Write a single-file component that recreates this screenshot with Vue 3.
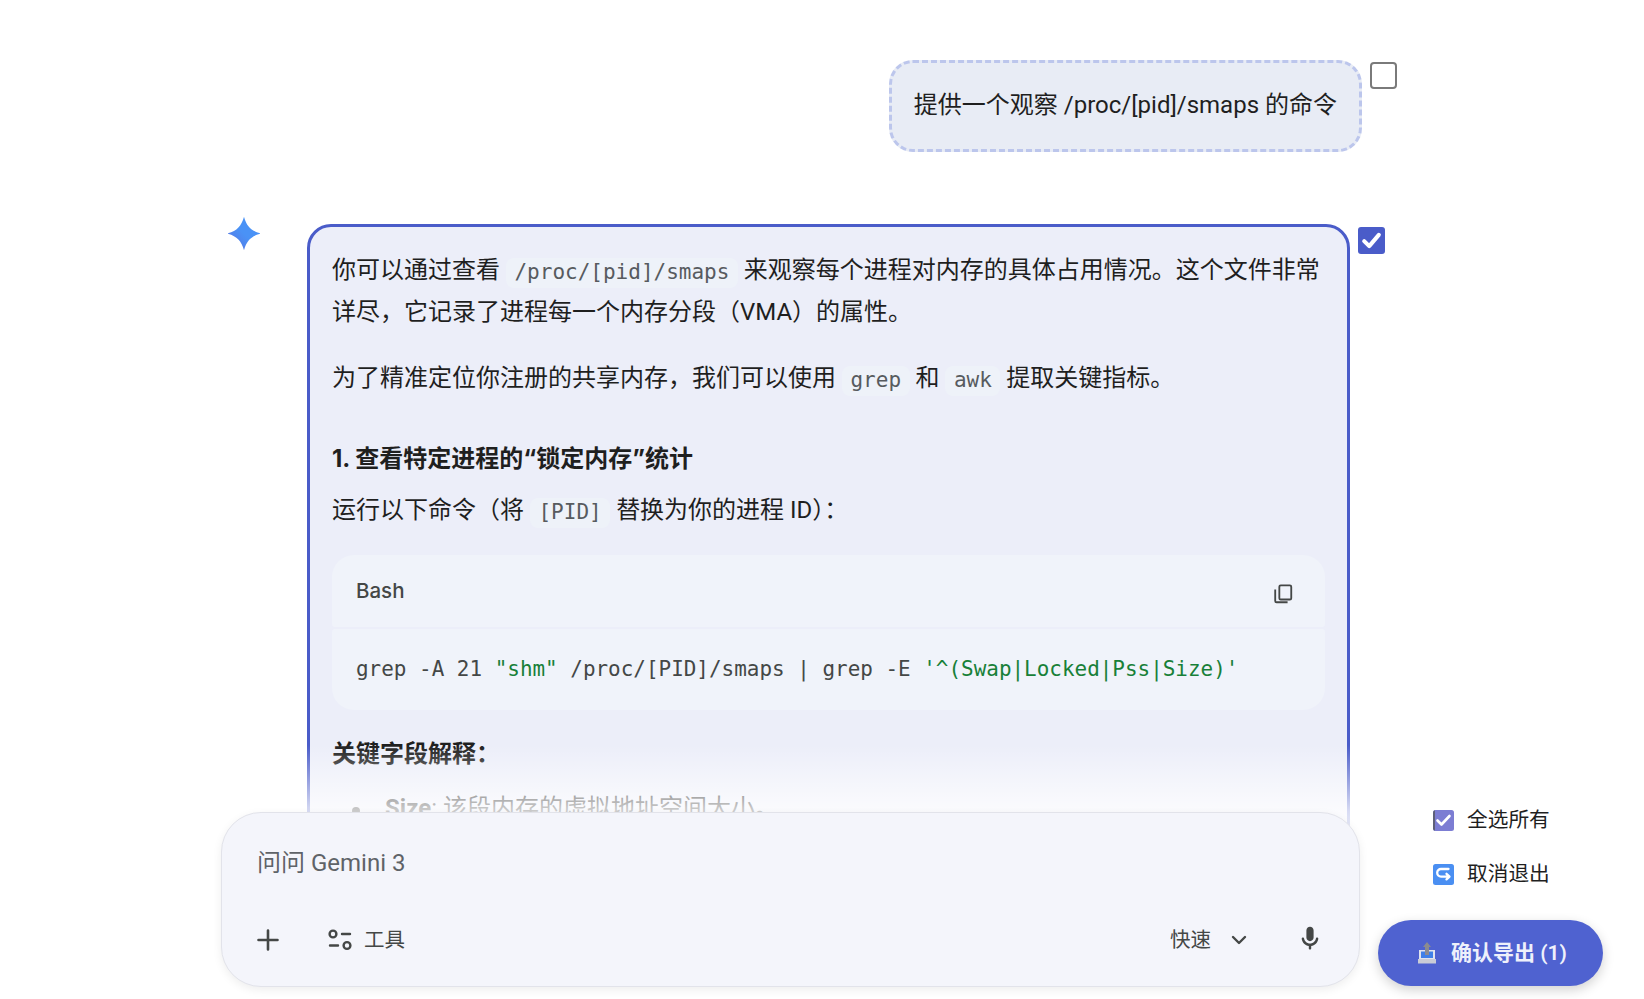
<script setup>
const codeParts = [
  { text: 'grep -A 21 ', cls: '' },
  { text: '"shm"', cls: 'str' },
  { text: ' /proc/[PID]/smaps | grep -E ', cls: '' },
  { text: "'^(Swap|Locked|Pss|Size)'", cls: 'str' },
]
</script>

<template>
  <div class="page">
    <div class="chat">
      <div class="user-row">
        <div class="bubble">提供一个观察 /proc/[pid]/smaps 的命令</div>
        <span class="check-empty"></span>
      </div>

      <div class="model-row">
        <svg class="spark" viewBox="0.5 0.5 23 23">
          <defs>
            <linearGradient id="sparkFill" x1="0.1" y1="0.9" x2="0.6" y2="0.4">
              <stop offset="0" stop-color="#5f68d6" />
              <stop offset="0.45" stop-color="#4f86ee" />
              <stop offset="0.8" stop-color="#4a92f6" />
            </linearGradient>
          </defs>
          <path fill="url(#sparkFill)" d="M12 0C14 7 17 10 24 12 17 14 14 17 12 24 10 17 7 14 0 12 7 10 10 7 12 0z" />
        </svg>

        <div class="card">
          <p>你可以通过查看 <code>/proc/[pid]/smaps</code> 来观察每个进程对内存的具体占用情况。这个文件非常详尽，它记录了进程每一个内存分段（VMA）的属性。</p>
          <p class="gap">为了精准定位你注册的共享内存，我们可以使用 <code>grep</code> 和 <code>awk</code> 提取关键指标。</p>
          <h3>1. 查看特定进程的“锁定内存”统计</h3>
          <p class="after-title">运行以下命令（将 <code>[PID]</code> 替换为你的进程 ID）：</p>

          <div class="code-block">
            <div class="code-head">
              <span>Bash</span>
              <svg class="copy" viewBox="0 0 24 24" fill="none" stroke="#444746" stroke-width="2">
                <rect x="8" y="2.500" width="13" height="15.500" rx="1.500" />
                <path d="M3.500 7v12.500A1.500 1.500 0 0 0 5 21h12" />
              </svg>
            </div>
            <pre class="code-body"><span v-for="(part, i) in codeParts" :key="i" :class="part.cls">{{ part.text }}</span></pre>
          </div>

          <p class="fields"><strong>关键字段解释：</strong></p>
          <ul>
            <li><span><strong>Size</strong>: 该段内存的虚拟地址空间大小。</span></li>
          </ul>
        </div>

        <span class="check-on">
          <svg viewBox="0 0 24 24" fill="none" stroke="#fff" stroke-width="3.600" stroke-linecap="round" stroke-linejoin="round">
            <path d="M5.500 12.500l4.500 4.500 8.500-10" />
          </svg>
        </span>
      </div>
    </div>

    <div class="dock">
      <div class="input">
        <div class="placeholder">问问 Gemini 3</div>
        <div class="toolbar">
          <svg class="plus" viewBox="0 0 22 22" stroke="#444746" stroke-width="2.600" stroke-linecap="round">
            <path d="M11 1.500v19M1.500 11h19" />
          </svg>
          <svg class="tools" viewBox="0 0 24 22" fill="none" stroke="#444746" stroke-width="2.400" stroke-linecap="round">
            <circle cx="5" cy="5" r="3.400" />
            <path d="M14 5h8M2 16.500h8" />
            <circle cx="19" cy="16.500" r="3.400" />
          </svg>
          <span class="tools-label">工具</span>
          <span class="speed">快速</span>
          <svg class="chevron" viewBox="0 0 16 10" fill="none" stroke="#444746" stroke-width="2.400" stroke-linecap="round" stroke-linejoin="round">
            <path d="M2 2l6 6 6-6" />
          </svg>
          <svg class="mic" viewBox="4.500 1.500 15 20.500" fill="#444746">
            <path d="M12 14c1.660 0 3-1.340 3-3V5c0-1.660-1.340-3-3-3S9 3.340 9 5v6c0 1.660 1.340 3 3 3zm5.910-3c-.49 0-.9.36-.98.85C16.520 14.200 14.470 16 12 16s-4.520-1.800-4.930-4.150c-.08-.49-.49-.85-.98-.85-.61 0-1.090.54-1 1.140.49 3 2.890 5.350 5.910 5.780V20c0 .55.45 1 1 1s1-.45 1-1v-2.080c3.020-.43 5.420-2.780 5.910-5.780.1-.6-.39-1.140-1-1.140z" />
          </svg>
        </div>
      </div>
    </div>

    <div class="actions">
      <div class="action">
        <svg viewBox="0 0 21 21">
          <rect width="21" height="21" rx="2.500" fill="#7c7dd3" />
          <path d="M0 2.500A2.500 2.500 0 0 1 2 .2V20.800A2.500 2.500 0 0 1 0 18.500z" fill="#5d5f78" />
          <path d="M4.500 10.500l4 4 8-8.500" fill="none" stroke="#fff" stroke-width="2.600" stroke-linecap="round" stroke-linejoin="round" />
        </svg>
        <span>全选所有</span>
      </div>
      <div class="action">
        <svg viewBox="0 0 21 21">
          <rect width="21" height="21" rx="2.500" fill="#4a8ff2" />
          <path d="M15.500 5H8a3.800 3.800 0 0 0 0 7.600h8M13.500 9.800l3 2.800-3 2.800" fill="none" stroke="#fff" stroke-width="2.300" stroke-linecap="round" stroke-linejoin="round" />
        </svg>
        <span>取消退出</span>
      </div>
      <button class="export">
        <svg viewBox="0 0 18 22">
          <path d="M1 8h16v10H1z" fill="#dfe3ee" />
          <path d="M3 9.500h12v6.500H3z" fill="#3f80e8" />
          <path d="M9 0l4 5H11v8H7V5H5z" fill="#8b8b90" />
          <path d="M0 17h18v4.500H0z" fill="#c9ccd6" />
        </svg>
        <span class="export-label">确认导出 (1)</span>
      </button>
    </div>
  </div>
</template>

<style scoped>
.page {
  position: relative;
  height: 100vh;
  overflow: hidden;
  padding-top: 60px;
  box-sizing: border-box;
  background: #fff;
  color: #1f1f1f;
  font-family: Roboto, "Noto Sans CJK SC", sans-serif;
  font-size: 24px;
  line-height: 42px;
}

.chat {
  margin-left: 228px;
  width: 1169px;
}

.user-row {
  display: flex;
  justify-content: flex-end;
  align-items: flex-start;
  gap: 8px;
}

.bubble {
  padding: 21px 22px 23px;
  background: #e8ecf5;
  border: 3px dashed #bcc6ec;
  border-radius: 24px;
}

.check-empty {
  width: 27px;
  height: 27px;
  margin-top: 2px;
  box-sizing: border-box;
  border: 2px solid #7a7a7a;
  border-radius: 4px;
  background: #fff;
}

.model-row {
  display: flex;
  align-items: flex-start;
  margin-top: 65px;
}

.spark {
  width: 32px;
  height: 33px;
  flex: none;
}

.card {
  width: 1043px;
  box-sizing: border-box;
  flex: none;
  margin-left: 47px;
  margin-top: 7px;
  padding: 22px 22px 240px;
  background: #eceef9;
  border: 3px solid #4a5cc9;
  border-radius: 24px;
}

.card p,
.card h3,
.card ul {
  margin: 0;
}

.gap {
  margin-top: 24px !important;
}

.card h3 {
  margin-top: 39px;
  font-family: Inter, "Noto Sans CJK SC", sans-serif;
  font-size: 24px;
  font-weight: 700;
}

.after-title {
  margin-top: 9px !important;
}

code {
  padding: 2px 8.5px 4px;
  border-radius: 8px;
  background: #eef2f9;
  color: #575b5f;
  font-family: "DejaVu Sans Mono", monospace;
  font-size: 21px;
  line-height: 24px;
  vertical-align: -1px;
}

.code-block {
  margin-top: 24px;
  display: flex;
  flex-direction: column;
  gap: 2px;
}

.code-head {
  display: flex;
  align-items: center;
  justify-content: space-between;
  height: 72px;
  padding: 0 31px 0 24px;
  border-radius: 22px 22px 3px 3px;
  background: #f0f3fa;
  color: #444746;
  font-family: Inter, "Noto Sans CJK SC", sans-serif;
  font-size: 20.5px;
  font-weight: 500;
}

.copy {
  width: 22px;
  height: 22px;
  margin-top: 5px;
}

.code-body {
  margin: 0;
  height: 81px;
  box-sizing: border-box;
  padding: 19px 24px;
  border-radius: 3px 3px 22px 22px;
  background: #f0f3fa;
  color: #444746;
  font-family: "DejaVu Sans Mono", monospace;
  font-size: 20.95px;
  line-height: 42px;
}

.str {
  color: #188038;
}

.fields {
  margin-top: 23px !important;
}

.card ul {
  margin-top: 12px;
  padding-left: 20px;
  list-style: none;
}

.card li {
  display: flex;
  align-items: center;
  gap: 25px;
}

.card li::before {
  content: "";
  width: 8px;
  height: 8px;
  flex: none;
  margin-top: 6px;
  border-radius: 50%;
  background: #1f1f1f;
}

.dock {
  position: absolute;
  left: 0;
  right: 0;
  bottom: 0;
  height: 254px;
  box-sizing: border-box;
  padding: 0 0 12px 221px;
  display: flex;
  align-items: flex-end;
  background: linear-gradient(to bottom, rgba(255, 255, 255, 0) 0, rgba(255, 255, 255, 0.78) 66px, #fff 110px);
}

.input {
  width: 1139px;
  height: 175px;
  box-sizing: border-box;
  padding: 33px 40px 26px 35px;
  display: flex;
  flex-direction: column;
  justify-content: space-between;
  border: 1px solid #e2e3ea;
  border-radius: 40px;
  background: #f4f5fb;
  box-shadow: 0 3px 10px rgba(0, 0, 0, 0.07);
}

.placeholder {
  font-size: 24px;
  line-height: 34px;
  color: #5f6368;
}

.toolbar {
  display: flex;
  align-items: center;
  height: 40px;
  font-size: 20.5px;
  color: #444746;
}

.plus {
  width: 22px;
  height: 22px;
}

.tools {
  width: 24px;
  height: 22px;
  margin-left: 49px;
}

.tools-label {
  margin-left: 12px;
}

.speed {
  margin-left: auto;
}

.chevron {
  width: 16px;
  height: 10px;
  margin-left: 20px;
}

.mic {
  width: 18px;
  height: 25px;
  margin-left: 54px;
  margin-bottom: 3px;
}

.actions {
  position: absolute;
  right: 41px;
  top: 799px;
  width: 225px;
  display: flex;
  flex-direction: column;
  gap: 12px;
  line-height: 42px;
  font-size: 20.7px;
}

.action {
  display: flex;
  align-items: center;
  gap: 13px;
  padding-left: 55px;
}

.action svg {
  width: 21px;
  height: 21px;
}

.export {
  margin-top: 13px;
  height: 66px;
  display: flex;
  align-items: center;
  justify-content: center;
  gap: 15px;
  padding: 0 0 0 4px;
  border: none;
  border-radius: 33px;
  background: #4f62d0;
  box-shadow: 0 4px 12px rgba(0, 0, 0, 0.18);
  color: #eef0fb;
  font-family: inherit;
  font-size: 21px;
  font-weight: 600;
}

.export-label {
  padding-bottom: 4px;
}

.export svg {
  width: 18px;
  height: 22px;
}

.check-on {
  width: 27px;
  height: 27px;
  flex: none;
  margin: 10px 0 0 8px;
  border-radius: 3px;
  background: #4a5cc9;
  display: flex;
}
</style>

<style>
html,
body {
  margin: 0;
  background: #fff;
  overflow: hidden;
}
</style>
